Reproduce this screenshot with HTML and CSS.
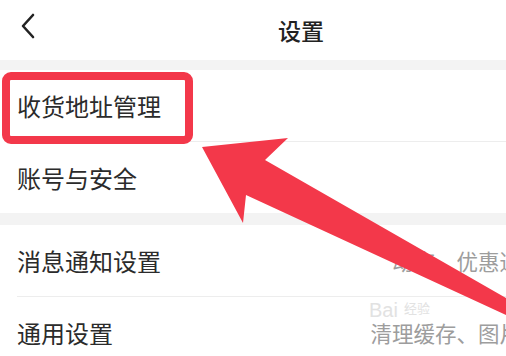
FILE: index.html
```html
<!DOCTYPE html>
<html lang="zh-CN">
<head>
<meta charset="utf-8">
<title>设置</title>
<link rel="stylesheet" href="styles.css">
</head>
<body>
<div class="screen">
  <header class="topbar">
    <span class="back">
      <svg width="16" height="26" viewBox="0 0 16 26"><path d="M13 2 L3 13 L13 24" fill="none" stroke="#222" stroke-width="2.6" stroke-linecap="round" stroke-linejoin="round"/></svg>
    </span>
    <h1 class="title">设置</h1>
  </header>
  <div class="gap"></div>
  <section class="group">
    <div class="row"><span class="label">收货地址管理</span></div>
    <div class="row"><span class="label">账号与安全</span></div>
  </section>
  <div class="gap gap-lg"></div>
  <section class="group">
    <div class="row"><span class="label">消息通知设置</span><span class="value">动态、优惠通知等</span></div>
    <div class="row"><span class="label">通用设置</span><span class="value">清理缓存、图片质量</span></div>
  </section>

  <div class="highlight"></div>
  <div class="watermark"><span class="wm-bai">Bai</span><span class="wm-jy">经验</span></div>
  <svg class="arrow" width="602" height="400" viewBox="0 0 602 400">
    <polygon points="202,147 288,138 265,160 560,329 560,340 246,195 243,223" fill="#f3384a"/>
  </svg>
</div>
</body>
</html>
```

FILE: styles.css
```css
html, body {
  margin: 0;
  padding: 0;
  background: #ffffff;
  overflow: hidden;
}
body {
  font-family: "Noto Sans CJK SC", "Noto Sans", sans-serif;
  color: #2b2b2b;
}
.screen {
  position: relative;
  width: 602px;
  height: 400px;
  background: #ffffff;
}
.topbar {
  height: 60px;
  display: flex;
  align-items: center;
  justify-content: center;
  position: relative;
  background: #fff;
}
.back {
  position: absolute;
  left: 20px;
  top: 13px;
  display: flex;
}
.title {
  margin: 0;
  font-size: 23px;
  font-weight: 500;
  color: #222;
  line-height: 1;
}
.gap {
  height: 10px;
  background: #f3f3f3;
}
.gap-lg {
  height: 12px;
}
.group {
  padding-left: 17px;
}
.row {
  height: 71px;
  display: flex;
  align-items: center;
  padding-right: 38px;
  border-bottom: 1px solid #ededed;
}
.row:last-child {
  border-bottom: none;
}
.label {
  font-size: 24px;
  color: #2b2b2b;
  white-space: nowrap;
}
.value {
  margin-left: auto;
  font-size: 21.5px;
  color: #9d9d9d;
  white-space: nowrap;
}
.highlight {
  position: absolute;
  left: 2px;
  top: 72px;
  width: 175px;
  height: 56px;
  border: 8px solid #f3384a;
  border-radius: 9px;
}
.watermark {
  position: absolute;
  left: 369px;
  top: 300px;
  display: flex;
  align-items: flex-end;
  gap: 6px;
  color: #e2e2e2;
  font-family: "Liberation Sans", sans-serif;
}
.wm-bai {
  font-size: 20px;
  line-height: 1;
}
.wm-jy {
  font-size: 13px;
  line-height: 1;
  font-family: "Noto Sans CJK SC", sans-serif;
  margin-bottom: 6px;
}
.arrow {
  position: absolute;
  left: 0;
  top: 0;
}
```
